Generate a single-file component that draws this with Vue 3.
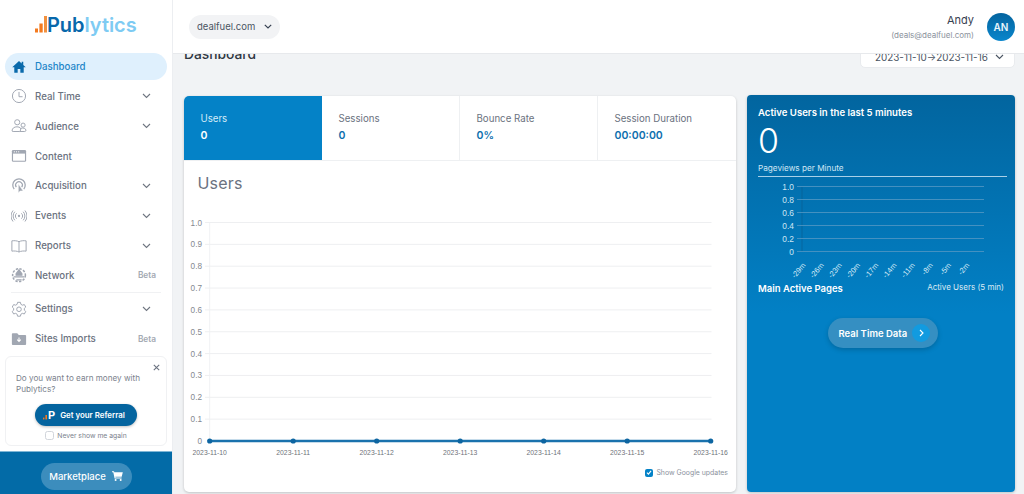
<script setup>
const nav = [
  { label: 'Dashboard', icon: 'home', active: true },
  { label: 'Real Time', icon: 'clock', chevron: true },
  { label: 'Audience', icon: 'people', chevron: true },
  { label: 'Content', icon: 'browser' },
  { label: 'Acquisition', icon: 'cursor', chevron: true },
  { label: 'Events', icon: 'signal', chevron: true },
  { label: 'Reports', icon: 'book', chevron: true },
  { label: 'Network', icon: 'globe', beta: true, divider: true },
  { label: 'Settings', icon: 'gear', chevron: true },
  { label: 'Sites Imports', icon: 'folder', beta: true },
]
const tabs = [
  { label: 'Users', value: '0', active: true },
  { label: 'Sessions', value: '0' },
  { label: 'Bounce Rate', value: '0%' },
  { label: 'Session Duration', value: '00:00:00' },
]
const yTicks = ['1.0', '0.9', '0.8', '0.7', '0.6', '0.5', '0.4', '0.3', '0.2', '0.1'].map((label, i) => ({ label, y: 126.5 + i * 21.85 }))
const xTicks = ['2023-11-10', '2023-11-11', '2023-11-12', '2023-11-13', '2023-11-14', '2023-11-15', '2023-11-16'].map((label, i) => ({ label, x: 25.7 + i * 83.5 }))
const miniY = ['1.0', '0.8', '0.6', '0.4', '0.2', '0'].map((label, i) => ({ label, y: 6.5 + i * 13 }))
const miniX = ['-29m', '-26m', '-23m', '-20m', '-17m', '-14m', '-11m', '-8m', '-5m', '-2m'].map((label, i) => ({ label, x: 59 + i * 18.2 }))
</script>

<template>
  <div class="app">
    <aside class="sidebar">
      <div class="logo">
        <svg class="logo-bars" width="12" height="18" viewBox="0 0 12 18">
          <rect x="0" y="13.5" width="3" height="4" fill="#f47a1f" />
          <rect x="4.4" y="8.5" width="3.3" height="9" fill="#f47a1f" />
          <rect x="9" y="1" width="3" height="16.5" fill="#f2913f" />
        </svg>
        <span class="logo-text"><span class="logo-dark">Pub</span><span class="logo-light">lytics</span></span>
      </div>
      <nav class="nav">
        <template v-for="item in nav" :key="item.label">
          <a class="nav-item" :class="{ active: item.active }">
            <svg class="nav-icon" width="16" height="16" viewBox="0 0 18 18" fill="none" stroke="currentColor" stroke-width="1.1">
              <template v-if="item.icon === 'home'">
                <path d="M9 2.2 1.4 9.4h2.3v6.2h3.8v-4.3h3v4.3h3.8V9.4h2.3L13.8 6.8V3.2H12v1.9L9 2.2Z" fill="currentColor" stroke="none" />
              </template>
              <template v-else-if="item.icon === 'clock'">
                <circle cx="9" cy="9" r="7.4" />
                <path d="M9 4.4V9.8h4" />
              </template>
              <template v-else-if="item.icon === 'people'">
                <circle cx="7" cy="4.8" r="2.9" />
                <circle cx="13.6" cy="8" r="2.3" />
                <path d="M1.2 14.6c0-3.2 2.6-4.7 5.6-4.7 1.6 0 3 .5 3.9 1.4.6 1.1-.1 3.5-1 3.9H2.4c-.8 0-1.2-.3-1.2-.6Z" />
                <path d="M11.2 11.6c2.4-.8 5.6 0 5.6 2.2 0 .9-.6 1.4-1.4 1.4h-5.7" />
              </template>
              <template v-else-if="item.icon === 'browser'">
                <rect x="1" y="2.2" width="16" height="13.4" rx="1.4" fill="currentColor" stroke="none" />
                <rect x="2.3" y="6.3" width="13.4" height="8" fill="#fff" stroke="none" />
                <path d="M3.2 4.3h1.2M5.6 4.3h1.2M8 4.3h1.2" stroke="#fff" />
              </template>
              <template v-else-if="item.icon === 'cursor'">
                <path d="M3.6 12.4a7 7 0 1 1 10.8 0" stroke-width="1.4" />
                <path d="M6 10.3a3.8 3.8 0 1 1 6 0" stroke-width="1.3" />
                <path d="M8.2 6.6V17l2.1-2.4 3.4.1-5.5-8.1Z" fill="currentColor" stroke="#fff" stroke-width=".6" />
              </template>
              <template v-else-if="item.icon === 'signal'">
                <circle cx="9" cy="9" r="1.3" fill="currentColor" stroke="none" />
                <path d="M6.3 6a4 4 0 0 0 0 6M11.7 6a4 4 0 0 1 0 6M4.3 4.2a7 7 0 0 0 0 9.6M13.7 4.2a7 7 0 0 1 0 9.6M2.3 2.8a9.6 9.6 0 0 0 0 12.4M15.7 2.8a9.6 9.6 0 0 1 0 12.4" />
              </template>
              <template v-else-if="item.icon === 'book'">
                <path d="M9 4.2C7 3 3.6 2.8 1 3.2v11.6c2.6-.4 6-.2 8 1 2-1.2 5.4-1.4 8-1V3.2C14.4 2.8 11 3 9 4.2Zm0 0v11.6" />
              </template>
              <template v-else-if="item.icon === 'globe'">
                <circle cx="9" cy="9.2" r="7.2" stroke-dasharray="2.6 1.6" stroke-width="1.7" />
                <path d="M9 3.2 5.8 7.6v1.6h6.4V7.6L9 3.2ZM3 11h12M6 14.4h6" stroke-width="1.4" fill="currentColor" />
              </template>
              <template v-else-if="item.icon === 'gear'">
                <path d="M7.4 1.5h3.2l.5 2.2 1.7 1 2.2-.7 1.6 2.8-1.6 1.5v2l1.6 1.5-1.6 2.8-2.2-.7-1.7 1-.5 2.2H7.4l-.5-2.2-1.7-1-2.2.7-1.6-2.8L3 10.3v-2L1.4 6.8 3 4l2.2.7 1.7-1 .5-2.2Z" />
                <circle cx="9" cy="9.3" r="2.6" />
              </template>
              <template v-else>
                <path d="M1 3.4c0-.6.4-1 1-1h5l1.8 2H16c.6 0 1 .4 1 1v9.3c0 .6-.4 1-1 1H2c-.6 0-1-.4-1-1V3.4Z" fill="currentColor" stroke="none" />
                <path d="M9 7.4v4.2M7 9.8l2 2 2-2" stroke="#fff" stroke-width="1.2" />
              </template>
            </svg>
            <span class="nav-label">{{ item.label }}</span>
            <svg v-if="item.chevron" class="nav-chevron" width="9" height="6" viewBox="0 0 9 6" fill="none" stroke="#6f7681" stroke-width="1.1"><path d="M1 1l3.5 3.5L8 1" /></svg>
            <span v-if="item.beta" class="beta">Beta</span>
          </a>
          <div v-if="item.divider" class="nav-divider"></div>
        </template>
      </nav>
      <div class="promo">
        <svg class="promo-close" width="7" height="7" viewBox="0 0 7 7" stroke="#6b7280" stroke-width="1.1"><path d="M.8.8l5.4 5.4M6.2.8.8 6.2" /></svg>
        <p class="promo-text">Do you want to earn money with Publytics?</p>
        <button class="promo-btn">
          <svg width="5" height="12" viewBox="0 0 5 12"><rect x="0" y="8.6" width="1.4" height="1.8" fill="#f47a1f" /><rect x="2.4" y="6" width="1.6" height="4.4" fill="#f47a1f" /></svg>
          <span class="promo-p">P</span>
          <span>Get your Referral</span>
        </button>
        <label class="never"><span class="never-box"></span>Never show me again</label>
      </div>
      <div class="market">
        <button class="market-btn">
          <span>Marketplace</span>
          <svg width="11" height="10" viewBox="0 0 11 10" fill="#fff"><path d="M0 .3h2l.3 1h8.5L9.7 5.7H3.3l.2.9h6.1v1H2.6L1.3 1.2H0V.3Z" /><circle cx="3.6" cy="9" r="1" /><circle cx="8.7" cy="9" r="1" /></svg>
        </button>
      </div>
    </aside>

    <div class="body">
      <header class="topbar">
        <div class="site-select">
          <span>dealfuel.com</span>
          <svg width="8" height="5" viewBox="0 0 8 5" fill="none" stroke="#374151" stroke-width="1.2"><path d="M.8.8 4 4 7.2.8" /></svg>
        </div>
        <div class="user">
          <div class="user-text">
            <div class="user-name">Andy</div>
            <div class="user-mail">(deals@dealfuel.com)</div>
          </div>
          <div class="avatar">AN</div>
        </div>
      </header>
      <main class="main">
        <div class="page-head">
          <h1 class="title">Dashboard</h1>
          <div class="range">
            <span>2023-11-10→2023-11-16</span>
            <svg width="9" height="6" viewBox="0 0 9 6" fill="none" stroke="#4b5563" stroke-width="1.1"><path d="M1 1l3.5 3.5L8 1" /></svg>
          </div>
        </div>
        <div class="columns">
          <section class="card">
            <div class="tabs">
              <div v-for="t in tabs" :key="t.label" class="tab" :class="{ on: t.active }">
                <div class="tab-label">{{ t.label }}</div>
                <div class="tab-value">{{ t.value }}</div>
              </div>
            </div>
            <h2 class="chart-title">Users</h2>
            <svg class="chart" width="552" height="396" viewBox="0 0 552 396">
              <line x1="25.7" y1="126" x2="25.7" y2="345" stroke="#f1f2f4" />
              <g v-for="t in yTicks" :key="t.label">
                <line x1="21" :y1="t.y" x2="527.5" :y2="t.y" stroke="#eeeff1" />
                <text x="18" :y="t.y + 3" class="ax" text-anchor="end">{{ t.label }}</text>
              </g>
              <g transform="translate(0 -96)">
                <text x="18" y="444" class="ax" text-anchor="end">0</text>
                <line x1="25.7" y1="441" x2="527" y2="441" stroke="#1a72ad" stroke-width="2.4" />
                <g v-for="t in xTicks" :key="t.label">
                  <circle :cx="t.x" cy="441" r="2.6" fill="#0d65a1" />
                  <text :x="t.x" y="455" class="ax-x" text-anchor="middle">{{ t.label }}</text>
                </g>
              </g>
            </svg>
            <label class="google">
              <span class="g-box"><svg width="6" height="5" viewBox="0 0 7 6" fill="none" stroke="#fff" stroke-width="1.3"><path d="M1 3.2 2.8 5 6 1" /></svg></span>
              Show Google updates
            </label>
          </section>
          <section class="live">
            <h3 class="live-title">Active Users in the last 5 minutes</h3>
            <div class="live-num">0</div>
            <div class="live-sub">Pageviews per Minute</div>
            <svg class="mini" width="268" height="78" viewBox="0 0 268 78">
              <line x1="55" y1="6" x2="55" y2="72" stroke="#0b5c8f" stroke-width=".6" />
              <g v-for="t in miniY" :key="t.label">
                <line x1="50" :y1="t.y" x2="237" :y2="t.y" stroke="#4c94c2" stroke-width=".9" />
                <text x="47" :y="t.y + 3.4" class="mini-y" text-anchor="end">{{ t.label }}</text>
              </g>
            </svg>
            <svg class="mini-x" width="268" height="24" viewBox="0 0 268 24">
              <text v-for="t in miniX" :key="t.label" :x="t.x" y="7.5" class="mini-t" text-anchor="end" :transform="`rotate(-50 ${t.x} 7.5)`">{{ t.label }}</text>
            </svg>
            <div class="live-row">
              <span class="main-pages">Main Active Pages</span>
              <span class="active-5">Active Users (5 min)</span>
            </div>
            <button class="rt-btn">
              <span>Real Time Data</span>
              <span class="rt-arrow"><svg width="5" height="8" viewBox="0 0 5 8" fill="none" stroke="#fff" stroke-width="1.1"><path d="M1 1l3 3-3 3" /></svg></span>
            </button>
          </section>
        </div>
      </main>
    </div>
  </div>
</template>

<style scoped>
.app {
  display: flex;
  width: 1024px;
  height: 494px;
  overflow: hidden;
  font-family: Inter, "Noto Sans", sans-serif;
  background: #f1f3f5;
  color: #374151;
}
.sidebar {
  width: 172px;
  flex: none;
  display: flex;
  flex-direction: column;
  background: #fff;
  border-right: 1px solid #eceef1;
  box-sizing: content-box;
}
.logo {
  height: 53px;
  display: flex;
  align-items: flex-start;
  padding: 13px 0 0 35px;
  box-sizing: border-box;
}
.logo-bars { margin-top: 2px; flex: none; }
.logo-text { font-size: 20px; line-height: 24px; font-weight: 600; letter-spacing: -0.05px; }
.logo-dark { color: #0868ab; }
.logo-light { color: #7ecbf3; }
.nav { display: flex; flex-direction: column; padding: 0 5px; }
.nav-item {
  height: 27px;
  margin-bottom: 2.85px;
  border-radius: 14px;
  display: flex;
  align-items: center;
  padding-left: 6px;
  padding-right: 12px;
  color: #a1a7b2;
  font-size: 9.7px;
  font-weight: 500;
}
.nav-label { margin-left: 8px; flex: 1; color: #6b7280; }
.nav-item.active { background: #dff0fd; color: #0a6aab; }
.nav-item.active .nav-label { color: #1d85c8; }
.nav-icon { flex: none; }
.nav-chevron { margin-right: 4px; }
.beta { font-size: 8.3px; font-weight: 600; color: #a4aab3; margin-right: -1px; }
.nav-divider { height: 1px; background: #f0f1f3; margin: 0 0 2.5px 6px; width: 150px; }
.promo {
  position: relative;
  margin: 1px 5px 0;
  height: 90px;
  box-sizing: border-box;
  border: 1px solid #f0f1f3;
  border-radius: 6px;
  padding: 16px 10px 0 10px;
  flex: none;
}
.promo-close { position: absolute; top: 7px; right: 6px; }
.promo-text { margin: 0; font-size: 8.15px; line-height: 11px; color: #7b828d; }
.promo-btn {
  display: flex;
  align-items: center;
  margin: 9px auto 0 19px;
  height: 22px;
  width: 102px;
  border: 0;
  border-radius: 11px;
  background: #04649f;
  color: #fff;
  font: 600 7.9px Inter, sans-serif;
  padding: 0 0 0 8px;
  box-shadow: 0 1px 3px rgba(0, 0, 0, .25);
  white-space: nowrap;
}
.promo-btn svg { flex: none; }
.promo-p { font-size: 11px; font-weight: 700; margin-right: 5px; }
.never {
  display: flex;
  align-items: center;
  justify-content: center;
  gap: 3px;
  margin-top: 5px;
  font-size: 6.8px;
  color: #7b828d;
}
.never-box { width: 7px; height: 7px; border: 1px solid #d1d5db; border-radius: 2.5px; display: block; }
.market {
  margin-top: 5px;
  flex: 1;
  background: #036ba7;
  display: flex;
  justify-content: center;
  padding-top: 11px;
  border-top: 1px solid #7fb6d6;
  box-sizing: border-box;
}
.market-btn {
  width: 91px;
  height: 27px;
  border: 0;
  border-radius: 14px;
  background: #3c8dbd;
  color: #fff;
  font: 500 9.5px Inter, sans-serif;
  display: flex;
  align-items: center;
  justify-content: center;
  gap: 6px;
  padding: 0;
}
.body { flex: 1; min-width: 0; display: flex; flex-direction: column; }
.topbar {
  height: 54px;
  flex: none;
  background: #fff;
  border-bottom: 1px solid #e7e9ec;
  box-sizing: border-box;
  display: flex;
  align-items: center;
  justify-content: space-between;
  padding: 0 9px 0 16px;
  position: relative;
  z-index: 2;
}
.site-select {
  width: 91px;
  height: 24px;
  border-radius: 12px;
  background: #f2f3f5;
  display: flex;
  align-items: center;
  justify-content: space-between;
  padding: 0 8px;
  box-sizing: border-box;
  font-size: 9.5px;
  color: #4b5563;
}
.user { display: flex; align-items: center; gap: 13px; }
.user-text { text-align: right; }
.user-name { font-size: 11px; line-height: 14px; color: #374151; margin-top: 1px; }
.user-mail { font-size: 8px; line-height: 11px; color: #8b929c; margin-top: 3px; }
.avatar {
  width: 28px;
  height: 28px;
  border-radius: 50%;
  background: linear-gradient(#04649f, #0a86cc);
  color: #e9f5fc;
  font-size: 10px;
  font-weight: 600;
  display: flex;
  align-items: center;
  justify-content: center;
}
.main { flex: 1; min-height: 0; padding: 0 9px 0 11px; overflow: hidden; }
.page-head {
  display: flex;
  justify-content: space-between;
  align-items: flex-start;
  height: 50px;
  margin-top: -8px;
}
.title { margin: 0; font-size: 13.8px; line-height: 16px; font-weight: 500; color: #2f3742; }
.range {
  width: 155px;
  height: 21.5px;
  background: #fff;
  border: 1px solid #e9ebee;
  border-radius: 5px;
  box-sizing: border-box;
  display: flex;
  align-items: center;
  justify-content: space-between;
  padding: 0 10px 0 14px;
  font-size: 9.9px;
  color: #4b5563;
  white-space: nowrap;
}
.columns { display: flex; gap: 11px; align-items: flex-start; }
.card {
  position: relative;
  width: 552px;
  height: 396px;
  background: #fff;
  border-radius: 5px;
  box-shadow: 0 1px 3px rgba(0, 0, 0, .2);
  overflow: hidden;
  flex: none;
}
.tabs { display: flex; height: 65px; border-bottom: 1px solid #eef0f2; box-sizing: border-box; }
.tab {
  width: 138px;
  border-right: 1px solid #eef0f2;
  box-sizing: border-box;
  padding: 16px 0 0 16.5px;
  color: #0d6fae;
}
.tab:last-child { border-right: 0; }
.tab.on { background: #0482c7; color: #fff; border-right: 0; }
.tab-label { font-size: 9.7px; line-height: 13px; color: #6b7280; }
.tab.on .tab-label { color: #d6ecf8; }
.tab-value { font-size: 10.5px; line-height: 14px; font-weight: 600; margin-top: 4px; }
.chart-title { margin: 12px 0 0 13.5px; font-size: 16px; line-height: 20px; font-weight: 400; color: #6b7280; letter-spacing: .2px; }
.chart { position: absolute; left: 0; top: 0; pointer-events: none; }
.ax { font-size: 8.2px; fill: #84888f; font-family: "Liberation Sans", sans-serif; }
.ax-x { font-size: 6.8px; fill: #6f737a; font-family: "Liberation Sans", sans-serif; }
.google {
  position: absolute;
  right: 8px;
  bottom: 15px;
  display: flex;
  align-items: center;
  gap: 3px;
  font-size: 6.9px;
  color: #8b929c;
}
.g-box {
  width: 8px;
  height: 8px;
  border-radius: 2px;
  background: #0482c7;
  display: flex;
  align-items: center;
  justify-content: center;
}
.live {
  width: 268px;
  height: 397px;
  margin-top: -1px;
  border-radius: 4px;
  background: linear-gradient(#02659f, #0280c5 55%);
  box-shadow: 0 1px 3px rgba(0, 0, 0, .2);
  color: #fff;
  padding: 11px 8px 0 11px;
  box-sizing: border-box;
  flex: none;
}
.live-title { margin: 0; font-size: 9.6px; line-height: 13px; font-weight: 600; }
.live-num { font-size: 34px; line-height: 36px; font-weight: 300; margin-top: 4px; }
.live-sub {
  margin-top: 3px;
  font-size: 8.2px;
  line-height: 12px;
  color: #cfe6f4;
  padding-bottom: 2px;
  border-bottom: 1px solid #a9d0e8;
}
.mini { display: block; margin: 2.5px -8px 0 -11px; }
.mini-y { font-size: 8.4px; fill: #cfe6f4; font-family: "Liberation Sans", sans-serif; }
.mini-x { display: block; margin: 0 -8px 0 -11px; }
.mini-t { font-size: 7.5px; fill: #d9ecf7; font-family: "Liberation Sans", sans-serif; }
.live-row { display: flex; justify-content: space-between; align-items: flex-start; padding-right: 3px; }
.main-pages { font-size: 9.5px; line-height: 14px; font-weight: 600; }
.active-5 { font-size: 8px; line-height: 11px; color: #dbeaf4; }
.rt-btn {
  display: flex;
  align-items: center;
  width: 110px;
  height: 30px;
  margin: 22.5px auto 0;
  border: 0;
  border-radius: 15px;
  background: #358fc2;
  color: #fff;
  font: 600 9.5px Inter, sans-serif;
  padding: 0 0 0 11px;
  gap: 5px;
  box-shadow: 0 2px 5px rgba(0, 0, 0, .18);
}
.rt-arrow {
  width: 18px;
  height: 18px;
  border-radius: 50%;
  background: #129be0;
  display: flex;
  align-items: center;
  justify-content: center;
}
</style>
